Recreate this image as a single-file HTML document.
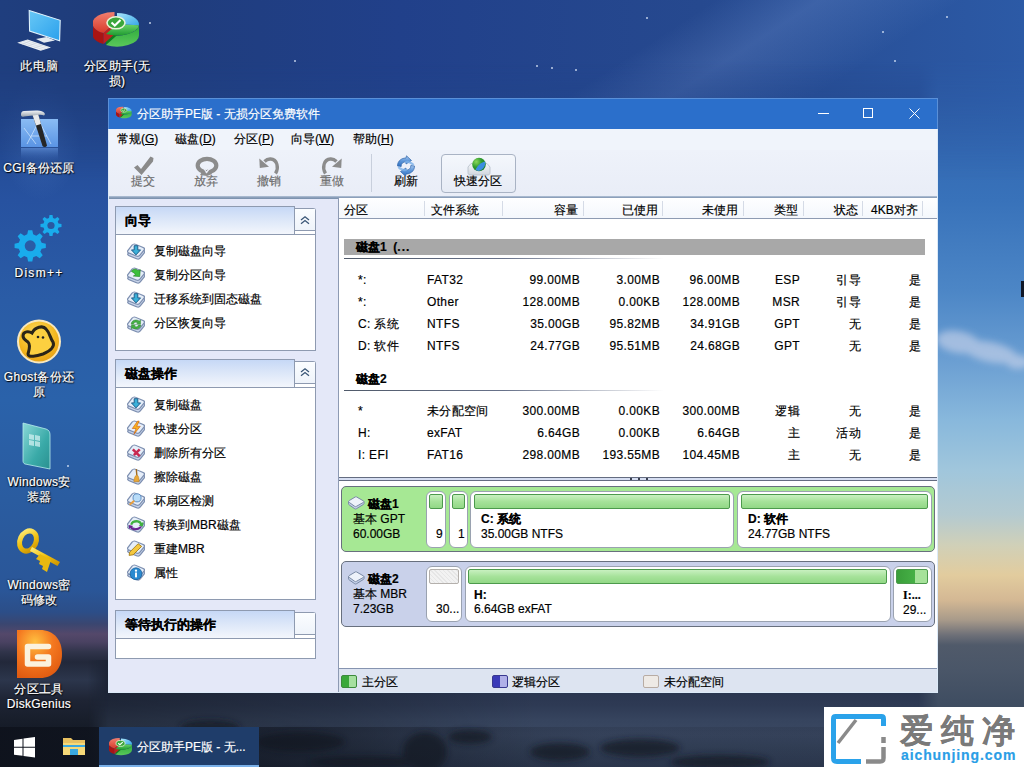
<!DOCTYPE html>
<html><head><meta charset="utf-8">
<style>
*{margin:0;padding:0;box-sizing:border-box}
html,body{width:1024px;height:767px;overflow:hidden}
body{position:relative;font-family:"Liberation Sans",sans-serif;font-size:12px;color:#000;background:#24488c;-webkit-text-stroke:.18px}
.a{position:absolute}
#wall{left:0;top:0;width:1024px;height:767px;
background:
radial-gradient(ellipse 40px 60px at 40px 140px,rgba(120,170,240,.18),rgba(120,170,240,0)),
linear-gradient(180deg,#1e3c7c 0px,#21468c 100px,#2752a0 200px,#2a5ca6 300px,#2a62aa 400px,#2a5ca0 500px,#2a5698 590px,#2c4e88 612px,#3a4670 624px,#54486a 634px,#4a4262 642px,#30344a 652px,#22283a 662px,#2c364c 680px,#1e2434 700px,#161c28 727px,#141a26 767px)}
#wallT{left:0;top:0;width:1024px;height:180px;-webkit-mask-image:linear-gradient(180deg,#000 0px,#000 60px,rgba(0,0,0,0) 180px);
background:linear-gradient(147deg,rgba(170,200,255,0) 0%,rgba(170,200,255,0) 55%,rgba(170,200,255,.16) 63%,rgba(170,200,255,.1) 67%,rgba(170,200,255,0) 74%),
linear-gradient(90deg,#1f3e7e 0px,#1f3c7a 120px,#21408a 400px,#26498f 700px,#2c5aa6 1024px)}
#wallR{left:918px;top:0;width:106px;height:727px;-webkit-mask-image:linear-gradient(90deg,rgba(0,0,0,0) 0px,#000 20px);
background:
linear-gradient(180deg,#2c5ca6 0px,#3064ae 100px,#3872ba 200px,#4c86c6 290px,#6a9ed2 360px,#88b8dc 420px,#a0c6dc 470px,#b4cad0 515px,#d0d0b8 545px,#e2cc9e 575px,#d4b894 600px,#a89a8a 620px,#6e7078 635px,#505a6a 645px,#4a5668 670px,#404e62 700px,#3a4a5e 727px)}
#wallB{left:88px;top:660px;width:850px;height:107px;-webkit-mask-image:linear-gradient(90deg,rgba(0,0,0,0) 0px,#000 20px);
background:
linear-gradient(90deg,rgba(0,0,0,.35) 0px,rgba(0,0,0,.2) 250px,rgba(0,0,0,0) 450px),
linear-gradient(180deg,#2c3850 0px,#2a3650 32px,#2e3a54 45px,#36445e 60px,#3a4862 75px,#34425a 90px,#2e3a52 107px)}
.lbl{position:absolute;color:#fff;font-size:12px;text-align:center;line-height:15px;letter-spacing:.3px;text-shadow:0 0 2px #000,1px 1px 1px #000;white-space:nowrap}
/* window */
#win{left:108px;top:98px;width:830px;height:595px;background:#e4e8f8;border:1px solid #dceaf8;border-top-color:#5a90d8}
#title{left:108px;top:98px;width:830px;height:31px;background:#2b6fcb;border:1px solid #5a90d8;border-bottom:none}
#ttext{left:137px;top:106px;color:#fff;line-height:16px}
#menu{left:109px;top:129px;width:828px;height:21px;background:#f0f4fb}
#tool{left:109px;top:150px;width:828px;height:47px;background:linear-gradient(180deg,#eef2fa,#e9edf7)}
#toolb{left:109px;top:196px;width:828px;height:3px;background:linear-gradient(180deg,#b4c4d8,#8498b4 60%,#7890ac)}
.mi{top:131px;line-height:16px}
.tb{top:174px;line-height:14px;color:#6e6e6e;text-align:center;width:40px}
#leftp{left:109px;top:199px;width:229px;height:493px;background:#e4e8f8}
.pnl{left:115px;width:201px;background:#fff;border:1px solid #8e9ab0}
.ph{left:115px;width:180px;height:28px;border:1px solid #8e9ab0;border-bottom:none;
 background:linear-gradient(180deg,#c6d8f6 0%,#dbe6f8 45%,#f3f6fc 100%);font-weight:bold;font-size:13px;padding:6px 0 0 9px;line-height:16px}
.ptab{left:295px;width:21px;height:26px;border:1px solid #8e9ab0;border-left:none;border-bottom:none;border-top-right-radius:3px;background:#fff}.ptb{left:294px;width:21px;height:1px;background:#8e9ab0}.ptf{left:295px;width:20px;height:22px;background:linear-gradient(180deg,#fbfdff,#eef3fa)}
.it{left:154px;line-height:16px}
.ic{left:127px;width:18px;height:16px}
/* list */
#list{left:338px;top:198px;width:599px;height:494px;background:#fff;border-left:1px solid #8d9ab3}
#hdr{left:339px;top:199px;width:598px;height:20px;background:linear-gradient(180deg,#fdfeff,#f4f7fc);border-bottom:1px solid #8e9bb2}
.hs{top:201px;width:1px;height:15px;background:#d5dbe6}
.ht{top:202px;line-height:16px}
.r{text-align:right}
.cell{line-height:16px;letter-spacing:.35px}
.dh{left:344px;width:581px;height:16px;background:#a8a8a8;font-weight:bold;padding-left:12px;line-height:16px}
.dl{left:344px;width:320px;height:1px;background:linear-gradient(90deg,#505a6a 0%,#68728a 50%,rgba(200,206,220,0) 100%)}
#split{left:339px;top:477px;width:598px;height:4px;background:#d6def2;border-top:1px solid #646c80;border-bottom:1px solid #646c80}
#legend{left:339px;top:668px;width:598px;height:24px;background:#dde4f1;border-top:1px solid #8694b0}
.lg{top:675px;width:16px;height:13px;border-radius:2px}
.lgt{top:674px;line-height:16px}

.blk{border:1px solid #68707e;border-radius:5px}
.box{background:#fff;border:1px solid #9aa2b0;border-radius:6px}
.bar{height:15px;border:1px solid #4c9a4c;border-radius:2px;background:linear-gradient(180deg,#c8f0c0 0%,#a6e29a 50%,#92d886 100%)}
.dt{line-height:15px;white-space:nowrap}
.b{font-weight:bold}
</style></head><body>
<div id="wall" class="a"></div>
<div id="wallB" class="a"></div>
<svg class="a" style="left:108px;top:692px" width="716" height="75" viewBox="0 0 716 75">
 <defs><filter id="rb" x="-30%" y="-60%" width="160%" height="220%"><feGaussianBlur stdDeviation="3"/></filter></defs>
 <g filter="url(#rb)" fill="#161c28" opacity=".75">
  <ellipse cx="317" cy="60" rx="22" ry="20"/>
  <ellipse cx="362" cy="45" rx="22" ry="7"/>
  <ellipse cx="192" cy="50" rx="45" ry="10"/>
  <ellipse cx="452" cy="60" rx="30" ry="9"/>
  <ellipse cx="532" cy="56" rx="40" ry="9"/>
  <ellipse cx="612" cy="70" rx="50" ry="7"/>
  <ellipse cx="42" cy="55" rx="45" ry="14"/>
  <ellipse cx="102" cy="36" rx="30" ry="8"/>
  <ellipse cx="260" cy="70" rx="60" ry="6"/>
 </g>
</svg>
<div id="wallR" class="a"></div>
<div id="wallT" class="a"></div>
<svg class="a" style="left:938px;top:318px" width="86" height="70" viewBox="0 0 86 70">
 <defs><filter id="bl" x="-20%" y="-50%" width="140%" height="200%"><feGaussianBlur stdDeviation="3.5"/></filter></defs>
 <g filter="url(#bl)" fill="#d8dcee" opacity=".55">
  <ellipse cx="20" cy="24" rx="22" ry="11" transform="rotate(10 20 24)"/>
  <ellipse cx="52" cy="34" rx="28" ry="10" transform="rotate(12 52 34)"/>
  <ellipse cx="80" cy="44" rx="12" ry="7"/>
 </g>
</svg>
<div class="a" style="left:1021px;top:281px;width:3px;height:16px;background:#101828"></div>

<div class="a" style="left:294px;top:60px;width:2px;height:2px;border-radius:1px;background:rgba(230,240,255,.8)"></div><div class="a" style="left:536px;top:65px;width:2px;height:2px;border-radius:1px;background:rgba(230,240,255,.8)"></div><div class="a" style="left:551px;top:67px;width:2px;height:2px;border-radius:1px;background:rgba(230,240,255,.8)"></div><div class="a" style="left:575px;top:69px;width:2px;height:2px;border-radius:1px;background:rgba(230,240,255,.8)"></div><div class="a" style="left:646px;top:17px;width:2px;height:2px;border-radius:1px;background:rgba(230,240,255,.8)"></div><div class="a" style="left:882px;top:31px;width:2px;height:2px;border-radius:1px;background:rgba(230,240,255,.8)"></div><div class="a" style="left:894px;top:60px;width:2px;height:2px;border-radius:1px;background:rgba(230,240,255,.8)"></div><div class="a" style="left:946px;top:16px;width:2px;height:2px;border-radius:1px;background:rgba(230,240,255,.8)"></div><div class="a" style="left:67px;top:465px;width:2px;height:2px;border-radius:1px;background:rgba(230,240,255,.8)"></div><div class="a" style="left:149px;top:22px;width:2px;height:2px;border-radius:1px;background:rgba(230,240,255,.8)"></div>


<!-- DESKTOP ICONS -->
<svg class="a" style="left:14px;top:8px" width="50" height="46" viewBox="0 0 50 46">
 <defs><linearGradient id="scr" x1="0" y1="0" x2="1" y2="1"><stop offset="0" stop-color="#68c8f6"/><stop offset="1" stop-color="#2aa0ec"/></linearGradient></defs>
 <path d="M15.2 2.5 L46.2 12.3 L45.6 32.8 L15.6 23.1 Z" fill="url(#scr)" stroke="#e0f2fc" stroke-width="1.1"/>
 <path d="M3.2 34.8 L13.6 31.6 L37 39.4 L26.7 42.7 Z" fill="#eef2f6"/>
 <path d="M6 34.5 L29 41.5 M9 33.5 L32 40.5 M12 32.5 L35 39.5 M8 36.5 L16 33 M14 38 L22 35 M20 40 L28 37" stroke="#c4ccd6" stroke-width=".5"/>
 <path d="M22 31 L32.5 29 L41 32.5 L30 34.8 Z" fill="#e4eaf0"/>
</svg>
<div class="lbl" style="left:-6px;top:59px;width:90px;letter-spacing:1px">此电脑</div>

<svg width="0" height="0" style="position:absolute"><defs>
  <linearGradient id="pr" x1="0" y1="0" x2="0" y2="1"><stop offset="0" stop-color="#f08070"/><stop offset="1" stop-color="#d83a2a"/></linearGradient>
  <linearGradient id="pb" x1="0" y1="0" x2="1" y2="1"><stop offset="0" stop-color="#a8e4fa"/><stop offset="1" stop-color="#38a8e8"/></linearGradient>
  <linearGradient id="pg" x1="0" y1="0" x2="0" y2="1"><stop offset="0" stop-color="#6ad46a"/><stop offset="1" stop-color="#1e9a30"/></linearGradient>
  <linearGradient id="pgs" x1="0" y1="0" x2="0" y2="1"><stop offset="0" stop-color="#2aa83a"/><stop offset="1" stop-color="#5ac85a"/></linearGradient>
 </defs><symbol id="pie" viewBox="0 0 50 38">
 <path d="M 46.0 12.3 A 22 11.3 0 0 1 13.0 22.1 L 13.0 33.1 A 22 11.3 0 0 0 46.0 23.3 Z" fill="url(#pgs)"/>
 <path d="M 24 12.3 L 13.0 22.1 L 13.0 33.1 L 24 23.3 Z" fill="#0f7a20"/>
 <path d="M 10.5 21.1 A 22 11.3 0 0 1 -0.5 11.3 L -0.5 22.3 A 22 11.3 0 0 0 10.5 32.1 Z" fill="#a81414"/>
 <path d="M 21.5 11.3 L 10.5 21.1 L 10.5 32.1 L 21.5 22.3 Z" fill="#c02020"/>
 <path d="M 21.5 11.3 L 10.5 21.1 A 22 11.3 0 0 1 21.5 0.0 Z" fill="url(#pr)"/>
 <path d="M 24 12.3 L 24.0 1.0 A 22 11.3 0 0 1 45.9 13.3 Z" fill="url(#pb)"/>
 <path d="M 24 12.3 L 45.9 13.3 A 22 11.3 0 0 1 13.0 22.1 Z" fill="url(#pg)"/>
 <ellipse cx="23" cy="10.8" rx="9" ry="6" fill="#3aa63a" stroke="#e8f4d8" stroke-width="1.6"/>
 <path d="M18.5 10.5 L21.8 13.5 L27.5 8.1" fill="none" stroke="#fff" stroke-width="2.1"/>
</symbol></svg><svg class="a" style="left:93px;top:12px" width="50" height="38"><use href="#pie"/></svg>
<div class="lbl" style="left:72px;top:59px;width:90px">分区助手(无<br>损)</div>

<svg class="a" style="left:16px;top:108px" width="48" height="52" viewBox="0 0 48 52">
 <defs><linearGradient id="cg" x1="0" y1="0" x2="0" y2="1"><stop offset="0" stop-color="#8abcf4"/><stop offset="1" stop-color="#5a94e4"/></linearGradient>
 <linearGradient id="cgr" x1="0" y1="0" x2="0" y2="1"><stop offset="0" stop-color="#5a88d0" stop-opacity=".8"/><stop offset="1" stop-color="#3a6ab8" stop-opacity="0"/></linearGradient>
 <linearGradient id="hm" x1="0" y1="0" x2="0" y2="1"><stop offset="0" stop-color="#f4f6f8"/><stop offset="1" stop-color="#9aa4ae"/></linearGradient></defs>
 <rect x="5" y="11" width="37" height="28" fill="url(#cg)"/>
 <rect x="5" y="40" width="37" height="12" fill="url(#cgr)"/>
 <path d="M11 36 L23 13 L35 36 M15 28 L31 28 M8 20 L20 36" stroke="#d8ecff" stroke-width=".8" fill="none" opacity=".85"/>
 <path d="M16.5 7 L22 5.5 L31 37.5 C30 39.5 27.5 39.5 26.5 38 Z" fill="#262626"/>
 <path d="M16.5 7 L22 5.5 L25 16 L20 17.5 Z" fill="#e8eaec"/>
 <path d="M5 6.5 C5 4.5 6 3 8 3 L20 2.5 C24 2.2 27 3 28.5 5 C29 6 29 7 28 7.5 C26 6.5 24 6.5 21 7 L8 8.5 C6 9 5 8.5 5 6.5 Z" fill="url(#hm)"/>
</svg>
<div class="lbl" style="left:-6px;top:161px;width:90px">CGI备份还原</div>

<svg class="a" style="left:14px;top:212px" width="50" height="52" viewBox="0 0 50 52">
 <g fill="#19acec" transform="translate(16.2 33.8) scale(1.1) translate(-15.5 -32.2)">
  <path d="M13.6 18 L17.4 18 L18.2 21.8 L21 23 L24.2 20.8 L26.9 23.5 L24.7 26.7 L25.9 29.5 L29.7 30.3 L29.7 34.1 L25.9 34.9 L24.7 37.7 L26.9 40.9 L24.2 43.6 L21 41.4 L18.2 42.6 L17.4 46.4 L13.6 46.4 L12.8 42.6 L10 41.4 L6.8 43.6 L4.1 40.9 L6.3 37.7 L5.1 34.9 L1.3 34.1 L1.3 30.3 L5.1 29.5 L6.3 26.7 L4.1 23.5 L6.8 20.8 L10 23 L12.8 21.8 Z"/>
  <circle cx="15.5" cy="32.2" r="5" fill="#2a5ca6"/>
 </g>
 <path fill="#19acec" d="M35.5 3 L38.5 3 L39 6 L41 6.8 L43.5 5 L45.5 7 L43.7 9.5 L44.5 11.5 L47.5 12 L47.5 15 L44.5 15.5 L43.7 17.5 L45.5 20 L43.5 22 L41 20.2 L39 21 L38.5 24 L35.5 24 L35 21 L33 20.2 L30.5 22 L28.5 20 L30.3 17.5 L29.5 15.5 L26.5 15 L26.5 12 L29.5 11.5 L30.3 9.5 L28.5 7 L30.5 5 L33 6.8 L35 6 Z"/>
 <circle cx="37" cy="13.5" r="3.6" fill="#2a58a0"/>
</svg>
<div class="lbl" style="left:-6px;top:266px;width:90px;letter-spacing:1.3px">Dism++</div>

<svg class="a" style="left:15px;top:318px" width="48" height="48" viewBox="0 0 48 48">
 <defs><radialGradient id="gh" cx=".45" cy=".35" r=".65"><stop offset="0" stop-color="#fde070"/><stop offset=".7" stop-color="#f4b820"/><stop offset="1" stop-color="#e8a418"/></radialGradient></defs>
 <circle cx="24" cy="23.5" r="22" fill="#f8e8c0"/>
 <circle cx="24" cy="23.5" r="20" fill="url(#gh)"/>
 <path d="M8 18 C8 13 14 13 17 15 C20 9 28 7 31 11 C35 15 35 20 38 24 C40 28 36 33 28 36 C22 38 13 40 13 36 C14 32 16 27 13 24 C10 22 8 21 8 18 Z" fill="#fcd040" stroke="#2a2418" stroke-width="3"/>
 <circle cx="23" cy="19" r="1.3" fill="#222"/><circle cx="28" cy="19.5" r="1.3" fill="#222"/>
</svg>
<div class="lbl" style="left:-6px;top:370px;width:90px">Ghost备份还<br>原</div>

<svg class="a" style="left:20px;top:421px" width="34" height="50" viewBox="0 0 34 50">
 <defs><linearGradient id="wi" x1="0" y1="0" x2="1" y2="1"><stop offset="0" stop-color="#8ad8d8"/><stop offset=".6" stop-color="#3aaaa8"/><stop offset="1" stop-color="#2a9090"/></linearGradient></defs>
 <path d="M3 2 L26 8 C29 9 30 11 30 14 L30 48 L5 43 C3.5 42.5 3 41 3 40 Z" fill="url(#wi)" stroke="#b8ecec" stroke-width=".8"/>
 <path d="M9 13 L14 14 L14 19 L9 18 Z M15 14 L20 15 L20 20 L15 19 Z M9 19 L14 20 L14 25 L9 24 Z M15 20 L20 21 L20 26 L15 25 Z" fill="#d8f4f4" opacity=".7"/>
</svg>
<div class="lbl" style="left:-6px;top:475px;width:90px">Windows安<br>装器</div>

<svg class="a" style="left:14px;top:524px" width="48" height="50" viewBox="0 0 48 50">
 <defs><linearGradient id="ky" x1="0" y1="0" x2="1" y2="1"><stop offset="0" stop-color="#fff080"/><stop offset=".5" stop-color="#f0c010"/><stop offset="1" stop-color="#c89000"/></linearGradient></defs>
 <ellipse cx="14" cy="17" rx="8" ry="10.5" transform="rotate(25 14 17)" fill="none" stroke="url(#ky)" stroke-width="5"/>
 <path d="M18 23 L46 38 L43.5 42 L16 27 Z" fill="url(#ky)"/>
 <path d="M26 30 L37 36 L33 48 L28 45 L29 42 L25 40 L26 37 L22 35 Z" fill="#e8b810"/>
</svg>
<div class="lbl" style="left:-6px;top:578px;width:90px">Windows密<br>码修改</div>

<svg class="a" style="left:16px;top:629px" width="48" height="50" viewBox="0 0 48 50">
 <defs><radialGradient id="dg" cx=".4" cy=".25" r=".8"><stop offset="0" stop-color="#ffc040"/><stop offset=".5" stop-color="#f47820"/><stop offset="1" stop-color="#e05a10"/></radialGradient></defs>
 <path d="M1 1 L24 1 C38 1 46 11 46 25 C46 39 38 49 24 49 L1 49 Z" fill="url(#dg)"/>
 <path d="M32.5 17.5 L11.5 17.5 L11.5 35 L32.5 35 L32.5 28 L21.5 28" fill="none" stroke="#fbf2de" stroke-width="5.5" stroke-linejoin="round" stroke-linecap="round"/>
</svg>
<div class="lbl" style="left:-6px;top:682px;width:90px">分区工具<br>DiskGenius</div>

<!-- TASKBAR -->
<div class="a" style="left:0;top:727px;width:1024px;height:40px;background:linear-gradient(90deg,rgba(14,18,28,.9) 0px,rgba(14,18,28,.65) 200px,rgba(14,18,28,.3) 400px,rgba(14,18,28,.12) 600px,rgba(14,18,28,.12) 1024px)"></div>
<div class="a" style="left:99px;top:727px;width:160px;height:40px;background:#1f3d6a"></div>
<div class="a" style="left:99px;top:765px;width:160px;height:2px;background:#7ab0e8"></div>
<svg class="a" style="left:14px;top:737px" width="21" height="21" viewBox="0 0 21 21"><path d="M0 3 L8.5 1.8 L8.5 9.8 L0 9.8 Z M9.5 1.6 L21 0 L21 9.8 L9.5 9.8 Z M0 10.8 L8.5 10.8 L8.5 18.8 L0 17.8 Z M9.5 10.8 L21 10.8 L21 20.6 L9.5 19 Z" fill="#fff"/></svg>
<svg class="a" style="left:63px;top:737px" width="23" height="19" viewBox="0 0 23 19"><path d="M0 1 L8 1 L10 3 L22 3 L22 18 L0 18 Z" fill="#e8c060"/><path d="M0 6 L22 6 L22 18 L0 18 Z" fill="#f6d878"/><path d="M7 18 L7 12 L15 12 L15 18" fill="#3aa8e0"/><path d="M0 9 L22 9" stroke="#3aa8e0" stroke-width="2"/></svg>
<svg class="a" style="left:109px;top:738px" width="25" height="19" viewBox="0 0 50 38"><use href="#pie"/></svg>
<div class="a" style="left:137px;top:739px;color:#fff;line-height:16px;white-space:nowrap">分区助手PE版 - 无...</div>

<!-- WATERMARK -->
<div class="a" style="left:824px;top:707px;width:200px;height:60px;background:#fff"></div>
<svg class="a" style="left:828px;top:711px" width="62" height="54" viewBox="0 0 62 54">
 <path d="M33 50.5 L9 50.5 C6 50.5 5.5 50 5.5 47 L5.5 8 C5.5 5 6 5.5 9 5.5 L52 5.5 C55 5.5 55.5 5 55.5 8 L55.5 15" fill="none" stroke="#2aa2ea" stroke-width="5"/>
 <path d="M55.5 26 L55.5 32 M55.5 36 L55.5 47 C55.5 50 55 50.5 52 50.5 L38 50.5" fill="none" stroke="#8a8a8a" stroke-width="4.5"/>
 <path d="M10 32 L28 9" stroke="#8a8a8a" stroke-width="3.5"/>
</svg>
<div class="a" style="left:900px;top:709px;font-size:33px;line-height:44px;color:#7a7a7a;white-space:nowrap;letter-spacing:8px;font-weight:bold">爱纯净</div>
<div class="a" style="left:901px;top:746px;font-size:14px;line-height:18px;color:#2a9ee6;font-weight:bold;white-space:nowrap;letter-spacing:.9px">aichunjing.com</div>
<!-- WINDOW -->
<div id="win" class="a"></div>
<div id="title" class="a"></div>
<div id="ttext" class="a">分区助手PE版 - 无损分区免费软件</div>
<div id="menu" class="a"></div>
<div id="tool" class="a"></div>
<div id="toolb" class="a"></div>

<div class="a mi" style="left:117px">常规(<u>G</u>)</div>
<div class="a mi" style="left:175px">磁盘(<u>D</u>)</div>
<div class="a mi" style="left:234px">分区(<u>P</u>)</div>
<div class="a mi" style="left:291px">向导(<u>W</u>)</div>
<div class="a mi" style="left:353px">帮助(<u>H</u>)</div>

<div class="a tb" style="left:123px">提交</div>
<div class="a tb" style="left:186px">放弃</div>
<div class="a tb" style="left:249px">撤销</div>
<div class="a tb" style="left:312px">重做</div>
<div class="a" style="left:371px;top:154px;width:1px;height:38px;background:#c8cfdc"></div>
<div class="a tb" style="left:386px;color:#000">刷新</div>
<div class="a" style="left:441px;top:154px;width:75px;height:39px;border:1px solid #a9b3c4;border-radius:4px;background:linear-gradient(180deg,#f4f7fc,#e6ebf5)"></div>
<div class="a tb" style="left:448px;width:60px;color:#000">快速分区</div>


<!-- toolbar icons -->
<svg class="a" style="left:130px;top:154px" width="26" height="22" viewBox="0 0 26 22">
 <path d="M4 13.5 L7.5 11 L11 15 L20.5 2.5 L23.5 4 L23 7.5 L11.5 21 Z" fill="#8a8a8a"/>
</svg>
<svg class="a" style="left:193px;top:155px" width="28" height="22" viewBox="0 0 28 22">
 <ellipse cx="14" cy="10.5" rx="9.3" ry="6.6" fill="none" stroke="#8c8c8c" stroke-width="4.2"/>
 <path d="M7 20 L11 14 L13 17 L15 14 L19 19 L14 21 Z" fill="#8c8c8c"/>
 <path d="M10.5 13 L14 18 M17 13 L13 18" stroke="#eaeef8" stroke-width="1.3"/>
</svg>
<svg class="a" style="left:257px;top:156px" width="24" height="22" viewBox="0 0 24 22">
 <path d="M18.5 17.5 C22 12 20.5 3.5 13.5 3 C10.5 2.8 9 4 7.5 5.5" fill="none" stroke="#8c8c8c" stroke-width="3.3"/>
 <path d="M2.3 2.5 L2.8 12 L12 10.8 Z" fill="#8c8c8c"/>
</svg>
<svg class="a" style="left:320px;top:156px" width="24" height="22" viewBox="0 0 24 22">
 <path d="M5.5 17.5 C2 12 3.5 3.5 10.5 3 C13.5 2.8 15 4 16.5 5.5" fill="none" stroke="#8c8c8c" stroke-width="3.3"/>
 <path d="M21.7 2.5 L21.2 12 L12 10.8 Z" fill="#8c8c8c"/>
</svg>
<svg class="a" style="left:395px;top:155px" width="22" height="22" viewBox="0 0 22 22">
 <defs><linearGradient id="rf" x1="0" y1="0" x2="0" y2="1"><stop offset="0" stop-color="#a8c8f0"/><stop offset=".5" stop-color="#5a94d8"/><stop offset="1" stop-color="#2f6fc0"/></linearGradient></defs>
 <path d="M2.5 11 C2.5 5.5 7 3 11 3 L11.5 .8 L16.5 5.5 L11 9 L11.2 6.8 C8 6.8 6 8.5 6.2 11.5 Z" fill="url(#rf)" stroke="#2f64a8" stroke-width=".7"/>
 <path d="M19.5 11 C19.5 16.5 15 19 11 19 L10.5 21.2 L5.5 16.5 L11 13 L10.8 15.2 C14 15.2 16 13.5 15.8 10.5 Z" fill="url(#rf)" stroke="#2f64a8" stroke-width=".7"/>
 <path d="M3.5 12 C5 14 9 16 12 14.5 M18.5 10 C17 8 13 6 10 7.5" stroke="#7ab0e8" stroke-width="2.2" fill="none" opacity=".8"/>
</svg>
<svg class="a" style="left:466px;top:155px" width="26" height="22" viewBox="0 0 26 22">
 <defs><radialGradient id="gl" cx=".3" cy=".3" r=".8"><stop offset="0" stop-color="#8ad85a"/><stop offset=".5" stop-color="#2e9a2e"/><stop offset="1" stop-color="#1a7a2a"/></radialGradient>
 <linearGradient id="dk" x1="0" y1="0" x2="0" y2="1"><stop offset="0" stop-color="#f4f6f8"/><stop offset="1" stop-color="#d0d6de"/></linearGradient></defs>
 <path d="M2 12 L5 8.5 L21 8.5 L24 12 L24 17.5 C24 19.5 23 20 21 20 L5 20 C3 20 2 19.5 2 17.5 Z" fill="url(#dk)" stroke="#b4bcc8" stroke-width=".8"/>
 <circle cx="13" cy="9.5" r="6.8" fill="url(#gl)"/>
 <path d="M9.5 15 C11 11 14.5 7.5 19.2 6.5 C19.8 11 17 15 12.5 16 Z" fill="#3a8ee0"/>
</svg>
<!-- title buttons -->
<div class="a" style="left:818px;top:113px;width:11px;height:1px;background:#fff"></div>
<div class="a" style="left:863px;top:108px;width:10px;height:10px;border:1px solid #fff"></div>
<svg class="a" style="left:909px;top:108px" width="11" height="11" viewBox="0 0 11 11"><path d="M.5 .5 L10.5 10.5 M10.5 .5 L.5 10.5" stroke="#fff" stroke-width="1"/></svg>
<!-- title app icon -->
<svg class="a" style="left:116px;top:106px" width="17" height="14" viewBox="0 0 50 38"><use href="#pie"/></svg>
<!-- LEFT PANEL -->
<div id="leftp" class="a"></div>
<div class="a pnl" style="top:234px;height:117px"></div>
<div class="a ph" style="top:206px">向导</div>
<div class="a ptab" style="top:208px"></div><div class="a ptf" style="top:209px"></div><div class="a ptb" style="top:230px"></div><svg class="a" style="left:299px;top:214.5px" width="12" height="10" viewBox="0 0 12 10"><path d="M2 5 L6 1.8 L10 5 M2 8.8 L6 5.6 L10 8.8" fill="none" stroke="#3a5676" stroke-width="1.3"/></svg>
<div class="a it" style="top:243px">复制磁盘向导</div>
<div class="a it" style="top:267px">复制分区向导</div>
<div class="a it" style="top:291px">迁移系统到固态磁盘</div>
<div class="a it" style="top:315px">分区恢复向导</div>

<div class="a pnl" style="top:387px;height:213px"></div>
<div class="a ph" style="top:359px">磁盘操作</div>
<div class="a ptab" style="top:361px"></div><div class="a ptf" style="top:362px"></div><div class="a ptb" style="top:383px"></div><svg class="a" style="left:299px;top:367px" width="12" height="10" viewBox="0 0 12 10"><path d="M2 5 L6 1.8 L10 5 M2 8.8 L6 5.6 L10 8.8" fill="none" stroke="#3a5676" stroke-width="1.3"/></svg>
<div class="a it" style="top:397px">复制磁盘</div>
<div class="a it" style="top:421px">快速分区</div>
<div class="a it" style="top:445px">删除所有分区</div>
<div class="a it" style="top:469px">擦除磁盘</div>
<div class="a it" style="top:493px">坏扇区检测</div>
<div class="a it" style="top:517px">转换到MBR磁盘</div>
<div class="a it" style="top:541px">重建MBR</div>
<div class="a it" style="top:565px">属性</div>

<div class="a pnl" style="top:638px;height:21px"></div>
<div class="a ph" style="top:610px">等待执行的操作</div>
<div class="a ptab" style="top:612px"></div><div class="a ptf" style="top:613px"></div><div class="a ptb" style="top:634px"></div>

<svg class="a" style="left:127px;top:243px" width="18" height="17" viewBox="0 0 17 16"><path transform="translate(8.8 9.4) scale(1 .72) rotate(30) translate(-6.5 -6.5)" d="M2.5 0 H10.5 Q13 0 13 2.5 V10.5 Q13 13 10.5 13 H2.5 Q0 13 0 10.5 V2.5 Q0 0 2.5 0 Z" fill="#c8d4ea" stroke="#7d8fb0" stroke-width="1.3"/><path transform="translate(8.5 6.8) scale(1 .72) rotate(30) translate(-6.5 -6.5)" d="M2.5 0 H10.5 Q13 0 13 2.5 V10.5 Q13 13 10.5 13 H2.5 Q0 13 0 10.5 V2.5 Q0 0 2.5 0 Z" fill="#e6eef9" stroke="#7d8fb0" stroke-width="1.3"/><path d="M6.8 2.5 L10.2 2.5 L10.2 6.5 L12.8 6.5 L8.5 11.2 L4.2 6.5 L6.8 6.5 Z" fill="#3ab0d8" stroke="#1a5a88" stroke-width=".9"/></svg>
<svg class="a" style="left:127px;top:267px" width="18" height="17" viewBox="0 0 17 16"><path transform="translate(8.8 9.4) scale(1 .72) rotate(30) translate(-6.5 -6.5)" d="M2.5 0 H10.5 Q13 0 13 2.5 V10.5 Q13 13 10.5 13 H2.5 Q0 13 0 10.5 V2.5 Q0 0 2.5 0 Z" fill="#c8d4ea" stroke="#7d8fb0" stroke-width="1.3"/><path transform="translate(8.5 6.8) scale(1 .72) rotate(30) translate(-6.5 -6.5)" d="M2.5 0 H10.5 Q13 0 13 2.5 V10.5 Q13 13 10.5 13 H2.5 Q0 13 0 10.5 V2.5 Q0 0 2.5 0 Z" fill="#e6eef9" stroke="#7d8fb0" stroke-width="1.3"/><path d="M4 4 C6 1.5 9 1.5 10.5 3.5 L12.5 2.5 L12 9 L6 8.5 L8 7 C7 5.5 5.5 5 4 4 Z" fill="#3cc03c" stroke="#1f7f1f" stroke-width=".6"/></svg>
<svg class="a" style="left:127px;top:291px" width="18" height="17" viewBox="0 0 17 16"><path transform="translate(8.8 9.4) scale(1 .72) rotate(30) translate(-6.5 -6.5)" d="M2.5 0 H10.5 Q13 0 13 2.5 V10.5 Q13 13 10.5 13 H2.5 Q0 13 0 10.5 V2.5 Q0 0 2.5 0 Z" fill="#c8d4ea" stroke="#7d8fb0" stroke-width="1.3"/><path transform="translate(8.5 6.8) scale(1 .72) rotate(30) translate(-6.5 -6.5)" d="M2.5 0 H10.5 Q13 0 13 2.5 V10.5 Q13 13 10.5 13 H2.5 Q0 13 0 10.5 V2.5 Q0 0 2.5 0 Z" fill="#e6eef9" stroke="#7d8fb0" stroke-width="1.3"/><path d="M6.8 2.5 L10.2 2.5 L10.2 6.5 L12.8 6.5 L8.5 11.2 L4.2 6.5 L6.8 6.5 Z" fill="#3ab0d8" stroke="#1a5a88" stroke-width=".9"/></svg>
<svg class="a" style="left:127px;top:316px" width="18" height="17" viewBox="0 0 17 16"><path transform="translate(8.8 9.4) scale(1 .72) rotate(30) translate(-6.5 -6.5)" d="M2.5 0 H10.5 Q13 0 13 2.5 V10.5 Q13 13 10.5 13 H2.5 Q0 13 0 10.5 V2.5 Q0 0 2.5 0 Z" fill="#c8d4ea" stroke="#7d8fb0" stroke-width="1.3"/><path transform="translate(8.5 6.8) scale(1 .72) rotate(30) translate(-6.5 -6.5)" d="M2.5 0 H10.5 Q13 0 13 2.5 V10.5 Q13 13 10.5 13 H2.5 Q0 13 0 10.5 V2.5 Q0 0 2.5 0 Z" fill="#e6eef9" stroke="#7d8fb0" stroke-width="1.3"/><path d="M4 7.5 C4 4 9 2.5 11.5 4.8 L12.8 3.8 L12.8 7.8 L8.8 7.8 L10.2 6.5 C8.5 5.2 6.5 5.8 6.2 7.5 Z M13 8.5 C13 12 8 13.5 5.5 11.2 L4.2 12.2 L4.2 8.2 L8.2 8.2 L6.8 9.5 C8.5 10.8 10.5 10.2 10.8 8.5 Z" fill="#44b044" stroke="#2a7a2a" stroke-width=".4"/></svg>
<svg class="a" style="left:127px;top:396px" width="18" height="17" viewBox="0 0 17 16"><path transform="translate(8.8 9.4) scale(1 .72) rotate(30) translate(-6.5 -6.5)" d="M2.5 0 H10.5 Q13 0 13 2.5 V10.5 Q13 13 10.5 13 H2.5 Q0 13 0 10.5 V2.5 Q0 0 2.5 0 Z" fill="#c8d4ea" stroke="#7d8fb0" stroke-width="1.3"/><path transform="translate(8.5 6.8) scale(1 .72) rotate(30) translate(-6.5 -6.5)" d="M2.5 0 H10.5 Q13 0 13 2.5 V10.5 Q13 13 10.5 13 H2.5 Q0 13 0 10.5 V2.5 Q0 0 2.5 0 Z" fill="#e6eef9" stroke="#7d8fb0" stroke-width="1.3"/><path d="M6.8 2.5 L10.2 2.5 L10.2 6.5 L12.8 6.5 L8.5 11.2 L4.2 6.5 L6.8 6.5 Z" fill="#3ab0d8" stroke="#1a5a88" stroke-width=".9"/></svg>
<svg class="a" style="left:127px;top:420px" width="18" height="17" viewBox="0 0 17 16"><path transform="translate(8.8 9.4) scale(1 .72) rotate(30) translate(-6.5 -6.5)" d="M2.5 0 H10.5 Q13 0 13 2.5 V10.5 Q13 13 10.5 13 H2.5 Q0 13 0 10.5 V2.5 Q0 0 2.5 0 Z" fill="#c8d4ea" stroke="#7d8fb0" stroke-width="1.3"/><path transform="translate(8.5 6.8) scale(1 .72) rotate(30) translate(-6.5 -6.5)" d="M2.5 0 H10.5 Q13 0 13 2.5 V10.5 Q13 13 10.5 13 H2.5 Q0 13 0 10.5 V2.5 Q0 0 2.5 0 Z" fill="#e6eef9" stroke="#7d8fb0" stroke-width="1.3"/><path d="M10 1 L5 8 L8.5 8 L6.5 13.5 L12.5 6 L9.2 6 L11.5 1 Z" fill="#f8b020" stroke="#d06010" stroke-width=".6"/></svg>
<svg class="a" style="left:127px;top:444px" width="18" height="17" viewBox="0 0 17 16"><path transform="translate(8.8 9.4) scale(1 .72) rotate(30) translate(-6.5 -6.5)" d="M2.5 0 H10.5 Q13 0 13 2.5 V10.5 Q13 13 10.5 13 H2.5 Q0 13 0 10.5 V2.5 Q0 0 2.5 0 Z" fill="#c8d4ea" stroke="#7d8fb0" stroke-width="1.3"/><path transform="translate(8.5 6.8) scale(1 .72) rotate(30) translate(-6.5 -6.5)" d="M2.5 0 H10.5 Q13 0 13 2.5 V10.5 Q13 13 10.5 13 H2.5 Q0 13 0 10.5 V2.5 Q0 0 2.5 0 Z" fill="#e6eef9" stroke="#7d8fb0" stroke-width="1.3"/><path d="M5.5 5 L12 11.5 M12 5 L6.5 10.5" stroke="#c82850" stroke-width="2.4"/></svg>
<svg class="a" style="left:127px;top:468px" width="18" height="17" viewBox="0 0 17 16"><path transform="translate(8.8 9.4) scale(1 .72) rotate(30) translate(-6.5 -6.5)" d="M2.5 0 H10.5 Q13 0 13 2.5 V10.5 Q13 13 10.5 13 H2.5 Q0 13 0 10.5 V2.5 Q0 0 2.5 0 Z" fill="#c8d4ea" stroke="#7d8fb0" stroke-width="1.3"/><path transform="translate(8.5 6.8) scale(1 .72) rotate(30) translate(-6.5 -6.5)" d="M2.5 0 H10.5 Q13 0 13 2.5 V10.5 Q13 13 10.5 13 H2.5 Q0 13 0 10.5 V2.5 Q0 0 2.5 0 Z" fill="#e6eef9" stroke="#7d8fb0" stroke-width="1.3"/><path d="M8.8 1 L9.3 7" stroke="#a06a20" stroke-width="1.3"/><path d="M6.5 13 C6.5 10 7.5 7 9.3 6.5 C11 7 11.5 10 11.5 13 Z" fill="#e8a838" stroke="#b07010" stroke-width=".4"/></svg>
<svg class="a" style="left:127px;top:492px" width="18" height="17" viewBox="0 0 17 16"><path transform="translate(8.8 9.4) scale(1 .72) rotate(30) translate(-6.5 -6.5)" d="M2.5 0 H10.5 Q13 0 13 2.5 V10.5 Q13 13 10.5 13 H2.5 Q0 13 0 10.5 V2.5 Q0 0 2.5 0 Z" fill="#c8d4ea" stroke="#7d8fb0" stroke-width="1.3"/><path transform="translate(8.5 6.8) scale(1 .72) rotate(30) translate(-6.5 -6.5)" d="M2.5 0 H10.5 Q13 0 13 2.5 V10.5 Q13 13 10.5 13 H2.5 Q0 13 0 10.5 V2.5 Q0 0 2.5 0 Z" fill="#e6eef9" stroke="#7d8fb0" stroke-width="1.3"/><circle cx="9.5" cy="5.5" r="3.8" fill="#b8dcf8" stroke="#5a8ac0" stroke-width=".9"/><path d="M6.8 8.2 L2.5 12" stroke="#e8a040" stroke-width="1.9"/></svg>
<svg class="a" style="left:127px;top:516px" width="18" height="17" viewBox="0 0 17 16"><path transform="translate(8.8 9.4) scale(1 .72) rotate(30) translate(-6.5 -6.5)" d="M2.5 0 H10.5 Q13 0 13 2.5 V10.5 Q13 13 10.5 13 H2.5 Q0 13 0 10.5 V2.5 Q0 0 2.5 0 Z" fill="#c8d4ea" stroke="#7d8fb0" stroke-width="1.3"/><path transform="translate(8.5 6.8) scale(1 .72) rotate(30) translate(-6.5 -6.5)" d="M2.5 0 H10.5 Q13 0 13 2.5 V10.5 Q13 13 10.5 13 H2.5 Q0 13 0 10.5 V2.5 Q0 0 2.5 0 Z" fill="#e6eef9" stroke="#7d8fb0" stroke-width="1.3"/><path d="M3 8 C4 3 12 2.5 14 6.5 L15.5 5.5 L15 10 L11 9 L12.3 8 C11 5.5 6 5.5 5 8.5 Z" fill="#40b040"/><path d="M14 10 C12 14.5 5 14.5 3 11 L1.8 12.5 L2 8.5 L5.8 9.5 L4.5 10.5 C6 12 10 12 12 10 Z" fill="#6a2090"/></svg>
<svg class="a" style="left:127px;top:540px" width="18" height="17" viewBox="0 0 17 16"><path transform="translate(8.8 9.4) scale(1 .72) rotate(30) translate(-6.5 -6.5)" d="M2.5 0 H10.5 Q13 0 13 2.5 V10.5 Q13 13 10.5 13 H2.5 Q0 13 0 10.5 V2.5 Q0 0 2.5 0 Z" fill="#c8d4ea" stroke="#7d8fb0" stroke-width="1.3"/><path transform="translate(8.5 6.8) scale(1 .72) rotate(30) translate(-6.5 -6.5)" d="M2.5 0 H10.5 Q13 0 13 2.5 V10.5 Q13 13 10.5 13 H2.5 Q0 13 0 10.5 V2.5 Q0 0 2.5 0 Z" fill="#e6eef9" stroke="#7d8fb0" stroke-width="1.3"/><path d="M2.5 11.5 L10.5 3.5 L13.8 6 L5.8 14 L2 14.5 Z" fill="#f4c840" stroke="#a07810" stroke-width=".8"/></svg>
<svg class="a" style="left:127px;top:564px" width="18" height="17" viewBox="0 0 17 16"><path transform="translate(8.8 9.4) scale(1 .72) rotate(30) translate(-6.5 -6.5)" d="M2.5 0 H10.5 Q13 0 13 2.5 V10.5 Q13 13 10.5 13 H2.5 Q0 13 0 10.5 V2.5 Q0 0 2.5 0 Z" fill="#c8d4ea" stroke="#7d8fb0" stroke-width="1.3"/><path transform="translate(8.5 6.8) scale(1 .72) rotate(30) translate(-6.5 -6.5)" d="M2.5 0 H10.5 Q13 0 13 2.5 V10.5 Q13 13 10.5 13 H2.5 Q0 13 0 10.5 V2.5 Q0 0 2.5 0 Z" fill="#e6eef9" stroke="#7d8fb0" stroke-width="1.3"/><circle cx="8.5" cy="9.2" r="5.6" fill="#2a8ad0" stroke="#0f5a98" stroke-width=".7"/><circle cx="8.5" cy="6.3" r="1.1" fill="#fff"/><rect x="7.6" y="8" width="1.8" height="4.6" fill="#fff"/></svg>
<!-- LIST -->
<div id="list" class="a"></div>
<div id="hdr" class="a"></div>
<div class="a ht" style="left:344px">分区</div>
<div class="a hs" style="left:424px"></div>
<div class="a ht" style="left:431px">文件系统</div>
<div class="a hs" style="left:502px"></div>
<div class="a ht r" style="left:508px;width:70px">容量</div>
<div class="a hs" style="left:583px"></div>
<div class="a ht r" style="left:588px;width:70px">已使用</div>
<div class="a hs" style="left:662px"></div>
<div class="a ht r" style="left:668px;width:70px">未使用</div>
<div class="a hs" style="left:743px"></div>
<div class="a ht r" style="left:748px;width:50px">类型</div>
<div class="a hs" style="left:803px"></div>
<div class="a ht r" style="left:808px;width:50px">状态</div>
<div class="a hs" style="left:862px"></div>
<div class="a ht" style="left:871px">4KB对齐</div>
<div class="a hs" style="left:922px"></div>

<div class="a dh" style="top:239px">磁盘1 &nbsp;(<span style="letter-spacing:1px">...</span></div>
<div class="a dl" style="top:258px"></div>
<div class="a dh" style="top:371px;background:transparent">磁盘2</div>
<div class="a dl" style="top:390px"></div>

<div class="a cell" style="left:358px;top:272px">*:</div>
<div class="a cell" style="left:427px;top:272px">FAT32</div>
<div class="a cell r" style="left:480px;width:100px;top:272px">99.00MB</div>
<div class="a cell r" style="left:560px;width:100px;top:272px">3.00MB</div>
<div class="a cell r" style="left:640px;width:100px;top:272px">96.00MB</div>
<div class="a cell r" style="left:750px;width:50px;top:272px">ESP</div>
<div class="a cell r" style="left:811px;width:50px;top:272px">引导</div>
<div class="a cell r" style="left:871px;width:50px;top:272px">是</div>
<div class="a cell" style="left:358px;top:294px">*:</div>
<div class="a cell" style="left:427px;top:294px">Other</div>
<div class="a cell r" style="left:480px;width:100px;top:294px">128.00MB</div>
<div class="a cell r" style="left:560px;width:100px;top:294px">0.00KB</div>
<div class="a cell r" style="left:640px;width:100px;top:294px">128.00MB</div>
<div class="a cell r" style="left:750px;width:50px;top:294px">MSR</div>
<div class="a cell r" style="left:811px;width:50px;top:294px">引导</div>
<div class="a cell r" style="left:871px;width:50px;top:294px">是</div>
<div class="a cell" style="left:358px;top:316px">C: 系统</div>
<div class="a cell" style="left:427px;top:316px">NTFS</div>
<div class="a cell r" style="left:480px;width:100px;top:316px">35.00GB</div>
<div class="a cell r" style="left:560px;width:100px;top:316px">95.82MB</div>
<div class="a cell r" style="left:640px;width:100px;top:316px">34.91GB</div>
<div class="a cell r" style="left:750px;width:50px;top:316px">GPT</div>
<div class="a cell r" style="left:811px;width:50px;top:316px">无</div>
<div class="a cell r" style="left:871px;width:50px;top:316px">是</div>
<div class="a cell" style="left:358px;top:338px">D: 软件</div>
<div class="a cell" style="left:427px;top:338px">NTFS</div>
<div class="a cell r" style="left:480px;width:100px;top:338px">24.77GB</div>
<div class="a cell r" style="left:560px;width:100px;top:338px">95.51MB</div>
<div class="a cell r" style="left:640px;width:100px;top:338px">24.68GB</div>
<div class="a cell r" style="left:750px;width:50px;top:338px">GPT</div>
<div class="a cell r" style="left:811px;width:50px;top:338px">无</div>
<div class="a cell r" style="left:871px;width:50px;top:338px">是</div>
<div class="a cell" style="left:358px;top:403px">*</div>
<div class="a cell" style="left:427px;top:403px">未分配空间</div>
<div class="a cell r" style="left:480px;width:100px;top:403px">300.00MB</div>
<div class="a cell r" style="left:560px;width:100px;top:403px">0.00KB</div>
<div class="a cell r" style="left:640px;width:100px;top:403px">300.00MB</div>
<div class="a cell r" style="left:750px;width:50px;top:403px">逻辑</div>
<div class="a cell r" style="left:811px;width:50px;top:403px">无</div>
<div class="a cell r" style="left:871px;width:50px;top:403px">是</div>
<div class="a cell" style="left:358px;top:425px">H:</div>
<div class="a cell" style="left:427px;top:425px">exFAT</div>
<div class="a cell r" style="left:480px;width:100px;top:425px">6.64GB</div>
<div class="a cell r" style="left:560px;width:100px;top:425px">0.00KB</div>
<div class="a cell r" style="left:640px;width:100px;top:425px">6.64GB</div>
<div class="a cell r" style="left:750px;width:50px;top:425px">主</div>
<div class="a cell r" style="left:811px;width:50px;top:425px">活动</div>
<div class="a cell r" style="left:871px;width:50px;top:425px">是</div>
<div class="a cell" style="left:358px;top:447px">I: EFI</div>
<div class="a cell" style="left:427px;top:447px">FAT16</div>
<div class="a cell r" style="left:480px;width:100px;top:447px">298.00MB</div>
<div class="a cell r" style="left:560px;width:100px;top:447px">193.55MB</div>
<div class="a cell r" style="left:640px;width:100px;top:447px">104.45MB</div>
<div class="a cell r" style="left:750px;width:50px;top:447px">主</div>
<div class="a cell r" style="left:811px;width:50px;top:447px">无</div>
<div class="a cell r" style="left:871px;width:50px;top:447px">是</div>
<div id="split" class="a"></div><div class="a" style="left:630px;top:478px;width:20px;height:2px;background:repeating-linear-gradient(90deg,#3a4050 0 2px,transparent 2px 8px)"></div>


<!-- DISK MAP -->
<div class="a blk" style="left:341px;top:486px;width:594px;height:66px;background:#a6e894"></div>
<svg class="a" style="left:347px;top:496px" width="19" height="15" viewBox="0 0 19 15"><path d="M1.5 5.5 L1.5 7.8 C1.5 8.3 1.8 8.6 2.2 8.9 L7.8 12.8 C8.3 13.1 8.8 13.1 9.3 12.8 L16.5 8.4 C16.9 8.1 17 7.8 17 7.4 L17 5.6" fill="#c4d0e8" stroke="#7a8aa6" stroke-width="1"/><path d="M2.2 4.6 L8.2 1 C8.7 .7 9.2 .7 9.7 1 L16.4 4.9 C17.1 5.3 17.1 6 16.4 6.4 L9.3 10.4 C8.8 10.7 8.3 10.7 7.8 10.4 L2.2 6.4 C1.4 5.9 1.4 5.1 2.2 4.6 Z" fill="#eef2fa" stroke="#7a8aa6" stroke-width="1"/></svg><div class="a dt b" style="left:368px;top:497px">磁盘1</div>
<div class="a dt" style="left:353px;top:512px">基本 GPT</div>
<div class="a dt" style="left:353px;top:527px">60.00GB</div>
<div class="a box" style="left:426px;top:491px;width:20px;height:57px"></div>
<div class="a bar" style="left:429px;top:494px;width:14px"></div>
<div class="a dt" style="left:436px;top:527px">9</div>
<div class="a box" style="left:449px;top:491px;width:19px;height:57px"></div>
<div class="a bar" style="left:452px;top:494px;width:13px"></div>
<div class="a dt" style="left:458px;top:527px">1</div>
<div class="a box" style="left:470px;top:491px;width:264px;height:57px"></div>
<div class="a bar" style="left:474px;top:494px;width:256px"></div>
<div class="a dt b" style="left:481px;top:512px">C: 系统</div>
<div class="a dt" style="left:481px;top:527px">35.00GB NTFS</div>
<div class="a box" style="left:737px;top:491px;width:195px;height:57px"></div>
<div class="a bar" style="left:741px;top:494px;width:187px"></div>
<div class="a dt b" style="left:748px;top:512px">D: 软件</div>
<div class="a dt" style="left:748px;top:527px">24.77GB NTFS</div>

<div class="a blk" style="left:341px;top:561px;width:594px;height:66px;background:#c9d1ea"></div>
<svg class="a" style="left:347px;top:571px" width="19" height="15" viewBox="0 0 19 15"><path d="M1.5 5.5 L1.5 7.8 C1.5 8.3 1.8 8.6 2.2 8.9 L7.8 12.8 C8.3 13.1 8.8 13.1 9.3 12.8 L16.5 8.4 C16.9 8.1 17 7.8 17 7.4 L17 5.6" fill="#c4d0e8" stroke="#7a8aa6" stroke-width="1"/><path d="M2.2 4.6 L8.2 1 C8.7 .7 9.2 .7 9.7 1 L16.4 4.9 C17.1 5.3 17.1 6 16.4 6.4 L9.3 10.4 C8.8 10.7 8.3 10.7 7.8 10.4 L2.2 6.4 C1.4 5.9 1.4 5.1 2.2 4.6 Z" fill="#eef2fa" stroke="#7a8aa6" stroke-width="1"/></svg><div class="a dt b" style="left:368px;top:572px">磁盘2</div>
<div class="a dt" style="left:353px;top:587px">基本 MBR</div>
<div class="a dt" style="left:353px;top:602px">7.23GB</div>
<div class="a box" style="left:426px;top:566px;width:36px;height:56px"></div>
<div class="a" style="left:429px;top:569px;width:30px;height:15px;border:1px solid #b4b0ac;border-radius:2px;background:repeating-linear-gradient(45deg,#e6e6e6 0 1px,#f2f2f2 1px 3px)"></div>
<div class="a dt" style="left:436px;top:602px">30...</div>
<div class="a box" style="left:465px;top:566px;width:426px;height:56px"></div>
<div class="a bar" style="left:468px;top:569px;width:419px"></div>
<div class="a dt b" style="left:474px;top:588px">H:</div>
<div class="a dt" style="left:474px;top:602px">6.64GB exFAT</div>
<div class="a box" style="left:893px;top:566px;width:39px;height:56px"></div>
<div class="a bar" style="left:896px;top:569px;width:32px;background:linear-gradient(90deg,#3a9e3a 0,#46b046 60%,#a6e29a 60%)"></div>
<div class="a dt b" style="left:903px;top:588px;font-family:'Liberation Serif',serif">I:...</div>
<div class="a dt" style="left:903px;top:603px">29...</div>
<div id="legend" class="a"></div>
<div class="a lg" style="left:341px;background:linear-gradient(90deg,#3aa83a 0,#3aa83a 50%,#a6e0a0 50%);border:1px solid #3c8a3c"></div>
<div class="a lgt" style="left:362px">主分区</div>
<div class="a lg" style="left:492px;background:linear-gradient(90deg,#3a3ab8 0,#3a3ab8 50%,#b0b0e8 50%);border:1px solid #383890"></div>
<div class="a lgt" style="left:512px">逻辑分区</div>
<div class="a lg" style="left:643px;background:#eeeae6;border:1px solid #b8aca4"></div>
<div class="a lgt" style="left:664px">未分配空间</div>

</body></html>
